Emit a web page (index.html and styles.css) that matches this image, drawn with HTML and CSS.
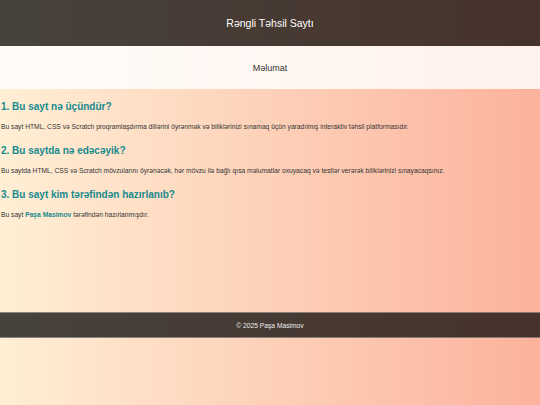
FILE: index.html
```html
<!DOCTYPE html>
<html lang="az">
<head>
<meta charset="utf-8">
<title>Rəngli Təhsil Saytı</title>
<link rel="stylesheet" href="styles.css">
</head>
<body>
<header class="site-header">
  <h1 class="site-title">Rəngli Təhsil Saytı</h1>
</header>
<nav class="site-nav">
  <a class="nav-link" href="#">Məlumat</a>
</nav>
<main class="content">
  <section class="block">
    <h2 class="block-title">1. Bu sayt nə üçündür?</h2>
    <p class="block-text">Bu sayt HTML, CSS və Scratch proqramlaşdırma dillərini öyrənmək və biliklərinizi sınamaq üçün yaradılmış interaktiv təhsil platformasıdır.</p>
  </section>
  <section class="block">
    <h2 class="block-title">2. Bu saytda nə edəcəyik?</h2>
    <p class="block-text">Bu saytda HTML, CSS və Scratch mövzularını öyrənəcək, hər mövzu ilə bağlı qısa məlumatlar oxuyacaq və testlər verərək biliklərinizi sınayacaqsınız.</p>
  </section>
  <section class="block">
    <h2 class="block-title">3. Bu sayt kim tərəfindən hazırlanıb?</h2>
    <p class="block-text">Bu sayt <strong class="author">Paşa Masimov</strong> tərəfindən hazırlanmışdır.</p>
  </section>
</main>
<footer class="site-footer">
  <p class="footer-text">© 2025 Paşa Masimov</p>
</footer>
</body>
</html>
```
FILE: styles.css
```css
html {
  min-height: 100%;
  background: linear-gradient(to right, #ffefd5, #fcb29c);
}
body {
  margin: 0;
  font-family: "Liberation Sans", Arial, sans-serif;
  color: #333;
}
.site-header {
  background: rgba(0, 0, 0, 0.72);
  height: 46px;
  display: flex;
  align-items: center;
  justify-content: center;
}
.site-title {
  margin: 0;
  font-size: 10.5px;
  font-weight: normal;
  color: #fff;
}
.site-nav {
  background: rgba(255, 255, 255, 0.82);
  height: 43px;
  display: flex;
  align-items: center;
  justify-content: center;
}
.nav-link {
  font-size: 9px;
  color: #333;
  text-decoration: none;
}
.content {
  box-sizing: border-box;
  height: 223px;
  padding: 12px 1px 0;
}
.block-title {
  margin: 0;
  font-size: 10px;
  line-height: 12px;
  font-weight: bold;
  color: #168a8e;
}
.block-text {
  margin: 10px 0 14px;
  font-size: 6.7px;
  line-height: 8px;
  color: #333;
}
.author {
  color: #168a8e;
}
.site-footer {
  background: rgba(0, 0, 0, 0.72);
  border-top: 1px solid rgba(255, 255, 255, 0.35);
  border-bottom: 1px solid rgba(255, 255, 255, 0.35);
  height: 24px;
  display: flex;
  align-items: center;
  justify-content: center;
}
.footer-text {
  margin: 0;
  font-size: 6.7px;
  color: #eee;
}
```
